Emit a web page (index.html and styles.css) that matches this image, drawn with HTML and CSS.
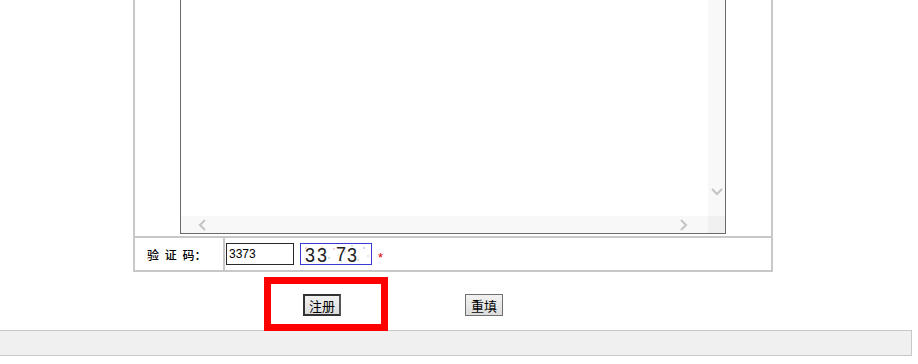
FILE: index.html
```html
<!DOCTYPE html>
<html lang="zh-CN">
<head>
<meta charset="UTF-8">
<title>用户注册</title>
<link rel="stylesheet" href="styles.css">
</head>
<body>
  <div class="reg-table">
    <div class="agree-row">
      <div class="agree-box">
        <div class="agree-text"></div>
        <div class="vbar">
          <svg class="chev" width="12" height="8" viewBox="0 0 12 8"><polyline points="1,1 6,6 11,1" fill="none" stroke="#c4c4c4" stroke-width="2"/></svg>
        </div>
        <div class="hbar">
          <svg width="8" height="12" viewBox="0 0 8 12"><polyline points="7,1 2,6 7,11" fill="none" stroke="#c4c4c4" stroke-width="2"/></svg>
          <svg width="8" height="12" viewBox="0 0 8 12"><polyline points="1,1 6,6 1,11" fill="none" stroke="#c4c4c4" stroke-width="2"/></svg>
        </div>
        <div class="corner"></div>
      </div>
    </div>
    <div class="code-row">
      <div class="label">验 证 码：</div>
      <div class="field">
        <input class="code-input" type="text" value="3373">
        <svg class="captcha" width="72" height="22" viewBox="0 0 72 22">
          <rect x="0.5" y="0.5" width="71" height="21" fill="#fff" stroke="#3a3ad0"/>
          <circle cx="6" cy="5" r="0.8" fill="#c9a"/>
          <circle cx="14" cy="17" r="0.8" fill="#9bd"/>
          <circle cx="22" cy="4" r="0.8" fill="#ec8"/>
          <circle cx="29" cy="15" r="0.8" fill="#8c9"/>
          <circle cx="34" cy="6" r="0.8" fill="#d9c"/>
          <circle cx="41" cy="18" r="0.8" fill="#abe"/>
          <circle cx="45" cy="9" r="0.8" fill="#eb9"/>
          <circle cx="52" cy="3" r="0.8" fill="#9cb"/>
          <circle cx="58" cy="17" r="0.8" fill="#caa"/>
          <circle cx="64" cy="5" r="0.8" fill="#8ad"/>
          <circle cx="68" cy="13" r="0.8" fill="#dc8"/>
          <circle cx="10" cy="10" r="0.6" fill="#bcd"/>
          <circle cx="38" cy="12" r="0.6" fill="#dbb"/>
          <text x="5" y="19" textLength="10" lengthAdjust="spacingAndGlyphs" class="captcha-text">3</text>
          <text x="17" y="19" textLength="10" lengthAdjust="spacingAndGlyphs" class="captcha-text">3</text>
          <text x="36" y="18" textLength="10" lengthAdjust="spacingAndGlyphs" class="captcha-text">7</text>
          <text x="47" y="19" textLength="10" lengthAdjust="spacingAndGlyphs" class="captcha-text">3</text>
        </svg>
        <span class="req">*</span>
      </div>
    </div>
  </div>

  <div class="actions">
    <span class="mark"><button class="btn btn-main" type="button">注册</button></span>
    <button class="btn" type="button">重填</button>
  </div>

  <div class="footer"></div>
</body>
</html>
```

FILE: styles.css
```css
body {
  margin: 0;
  font-family: "Liberation Sans", "Noto Sans CJK SC", sans-serif;
  font-size: 12px;
  color: #000;
  background: #fff;
}

.reg-table {
  width: 640px;
  margin-left: 133px;
  box-sizing: border-box;
  border: 2px solid #c8c8c8;
  border-top: 0;
}

.agree-row {
  padding-bottom: 2px;
}

.agree-box {
  width: 546px;
  height: 234px;
  margin: 0 auto;
  box-sizing: border-box;
  border: 1px solid #6a6a6a;
  border-top: 0;
  display: grid;
  grid-template-columns: 1fr 17px;
  grid-template-rows: 1fr 17px;
}

.vbar {
  background: #f8f8f8;
  display: flex;
  flex-direction: column;
  justify-content: flex-end;
  align-items: center;
  padding-bottom: 20px;
}

.hbar {
  background: #f8f8f8;
  display: flex;
  justify-content: space-between;
  align-items: center;
  padding: 0 20px 0 17px;
}

.hbar svg,
.vbar svg {
  display: block;
}

.corner {
  background: #f0f0f0;
}

.code-row {
  display: flex;
  height: 32px;
  border-top: 2px solid #c8c8c8;
}

.label {
  width: 90px;
  border-right: 2px solid #c8c8c8;
  padding-left: 12px;
  box-sizing: border-box;
  display: flex;
  align-items: center;
  font-family: "Noto Sans CJK SC", sans-serif;
  font-size: 12px;
  font-weight: 500;
  word-spacing: 3px;
}

.field {
  display: flex;
  align-items: center;
  padding-left: 1px;
}

.code-input {
  width: 68px;
  height: 22px;
  box-sizing: border-box;
  margin: 0;
  padding: 0 2px;
  border: 1px solid #2a2a2a;
  font-family: "Liberation Sans", sans-serif;
  font-size: 12px;
  color: #000;
}

.captcha {
  display: block;
  margin-left: 6px;
}

.captcha-text {
  font-family: "Liberation Sans", sans-serif;
  font-size: 20px;
  fill: #222;
}

.req {
  color: #e00000;
  font-size: 13px;
  margin: 7px 0 0 6px;
}

.actions {
  display: flex;
  align-items: flex-start;
  gap: 124px;
  padding: 22px 0 14px 303px;
}

.mark {
  position: relative;
  display: block;
}

.mark::after {
  content: "";
  position: absolute;
  left: -39px;
  top: -17px;
  right: -47px;
  bottom: -15px;
  border: 7px solid #ff0000;
}

.btn {
  display: block;
  width: 38px;
  height: 22px;
  margin: 0;
  padding: 0;
  box-sizing: border-box;
  border: 1px solid #707070;
  background: linear-gradient(#f2f2f2, #dcdcdc);
  font-family: "Noto Sans CJK SC", sans-serif;
  font-size: 13px;
  color: #000;
}

.btn-main {
  border: 2px solid #333;
  border-right-color: #555;
}

.footer {
  width: 912px;
  height: 26px;
  box-sizing: border-box;
  border: 1px solid #c8c8c8;
  border-left: 0;
  background: #f0f0f0;
}
```
